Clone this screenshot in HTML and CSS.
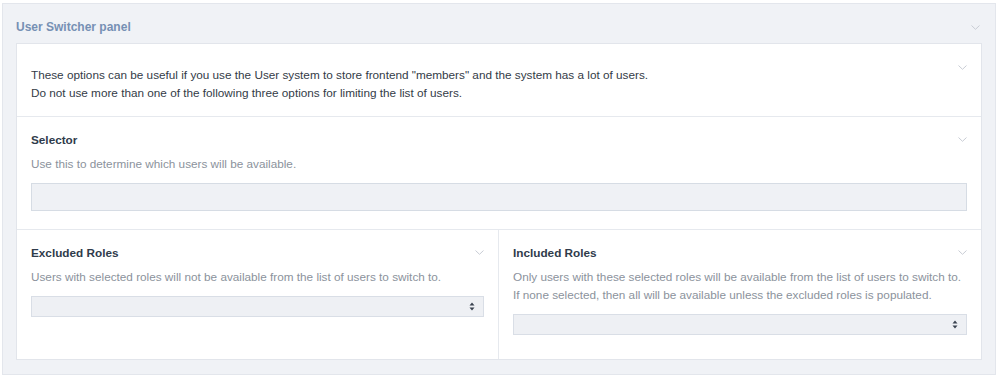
FILE: index.html
```html
<!DOCTYPE html>
<html>
<head>
    <title>User Switcher panel</title>
    <link rel="stylesheet" href="styles.css">
</head>
<body>
    <div class="panel">
        <div class="panel-header">
            <span class="panel-title">User Switcher panel</span>
            <svg class="toggle" width="9" height="5" viewBox="0 0 9 5"><path d="M0.5 0.5 L4.5 4.3 L8.5 0.5" fill="none" stroke="#c8ccd4" stroke-width="1"/></svg>
        </div>

        <div class="panel-body">
            <div class="field field-intro">
                <svg class="toggle corner" width="9" height="5" viewBox="0 0 9 5"><path d="M0.5 0.5 L4.5 4.3 L8.5 0.5" fill="none" stroke="#c8ccd4" stroke-width="1"/></svg>
                <p>These options can be useful if you use the User system to store frontend "members" and the system has a lot of users.<br>
                Do not use more than one of the following three options for limiting the list of users.</p>
            </div>

            <div class="field">
                <div class="field-header">
                    <span class="field-label">Selector</span>
                    <svg class="toggle" width="9" height="5" viewBox="0 0 9 5"><path d="M0.5 0.5 L4.5 4.3 L8.5 0.5" fill="none" stroke="#c8ccd4" stroke-width="1"/></svg>
                </div>
                <p class="field-desc">Use this to determine which users will be available.</p>
                <input type="text" class="text-input">
            </div>

            <div class="field-row">
                <div class="field">
                    <div class="field-header">
                        <span class="field-label">Excluded Roles</span>
                        <svg class="toggle" width="9" height="5" viewBox="0 0 9 5"><path d="M0.5 0.5 L4.5 4.3 L8.5 0.5" fill="none" stroke="#c8ccd4" stroke-width="1"/></svg>
                    </div>
                    <p class="field-desc">Users with selected roles will not be available from the list of users to switch to.</p>
                    <div class="select-box">
                        <svg width="6" height="9" viewBox="0 0 6 9"><path d="M3 0.5 L5.5 3.5 L0.5 3.5 Z M3 8.5 L5.5 5.5 L0.5 5.5 Z" fill="#3a4350"/></svg>
                    </div>
                </div>
                <div class="field">
                    <div class="field-header">
                        <span class="field-label">Included Roles</span>
                        <svg class="toggle" width="9" height="5" viewBox="0 0 9 5"><path d="M0.5 0.5 L4.5 4.3 L8.5 0.5" fill="none" stroke="#c8ccd4" stroke-width="1"/></svg>
                    </div>
                    <p class="field-desc">Only users with these selected roles will be available from the list of users to switch to.<br>
                    If none selected, then all will be available unless the excluded roles is populated.</p>
                    <div class="select-box">
                        <svg width="6" height="9" viewBox="0 0 6 9"><path d="M3 0.5 L5.5 3.5 L0.5 3.5 Z M3 8.5 L5.5 5.5 L0.5 5.5 Z" fill="#3a4350"/></svg>
                    </div>
                </div>
            </div>
        </div>
    </div>
</body>
</html>
```

FILE: styles.css
```css
body {
    margin: 0;
    padding: 3px 4px 0 2px;
    background: #fff;
    font-family: "Liberation Sans", Arial, sans-serif;
    font-size: 11.75px;
    color: #333b47;
}
p { margin: 0; }

.panel {
    background: #f0f2f6;
    border: 1px solid #e3e6ec;
    padding: 0 13px 14px 13px;
}
.panel-header {
    display: flex;
    justify-content: space-between;
    align-items: center;
    height: 14px;
    padding: 16px 2px 9px 0;
}
.panel-title {
    font-weight: 700;
    color: #7690b4;
    font-size: 12px;
}

.panel-body {
    background: #fff;
    border: 1px solid #e2e5eb;
}

.field {
    position: relative;
    padding: 13px 14px 18px 14px;
    border-top: 1px solid #e6e9ee;
}
.field:first-child { border-top: none; }
.field-intro {
    padding: 22px 14px 14px 14px;
    line-height: 18px;
}
.toggle.corner {
    position: absolute;
    top: 21px;
    right: 14px;
}

.field-header {
    display: flex;
    justify-content: space-between;
    align-items: center;
    height: 18px;
}
.field-label {
    font-weight: 700;
    color: #2f3b4b;
}
.field-desc {
    color: #8b929c;
    line-height: 18px;
    margin-top: 7px;
}

.text-input {
    display: block;
    box-sizing: border-box;
    width: 100%;
    height: 28px;
    margin-top: 10px;
    background: #eff1f5;
    border: 1px solid #d6dce4;
    outline: none;
}

.field-row {
    display: grid;
    grid-template-columns: 481px 1fr;
    border-top: 1px solid #e6e9ee;
}
.field-row .field {
    border-top: none;
    padding-top: 13px;
    padding-bottom: 24px;
}
.field-row .field + .field {
    border-left: 1px solid #e6e9ee;
}

.select-box {
    display: flex;
    justify-content: flex-end;
    align-items: center;
    box-sizing: border-box;
    height: 21px;
    margin-top: 10px;
    padding-right: 8px;
    background: #eef0f4;
    border: 1px solid #d9dee6;
}
```
